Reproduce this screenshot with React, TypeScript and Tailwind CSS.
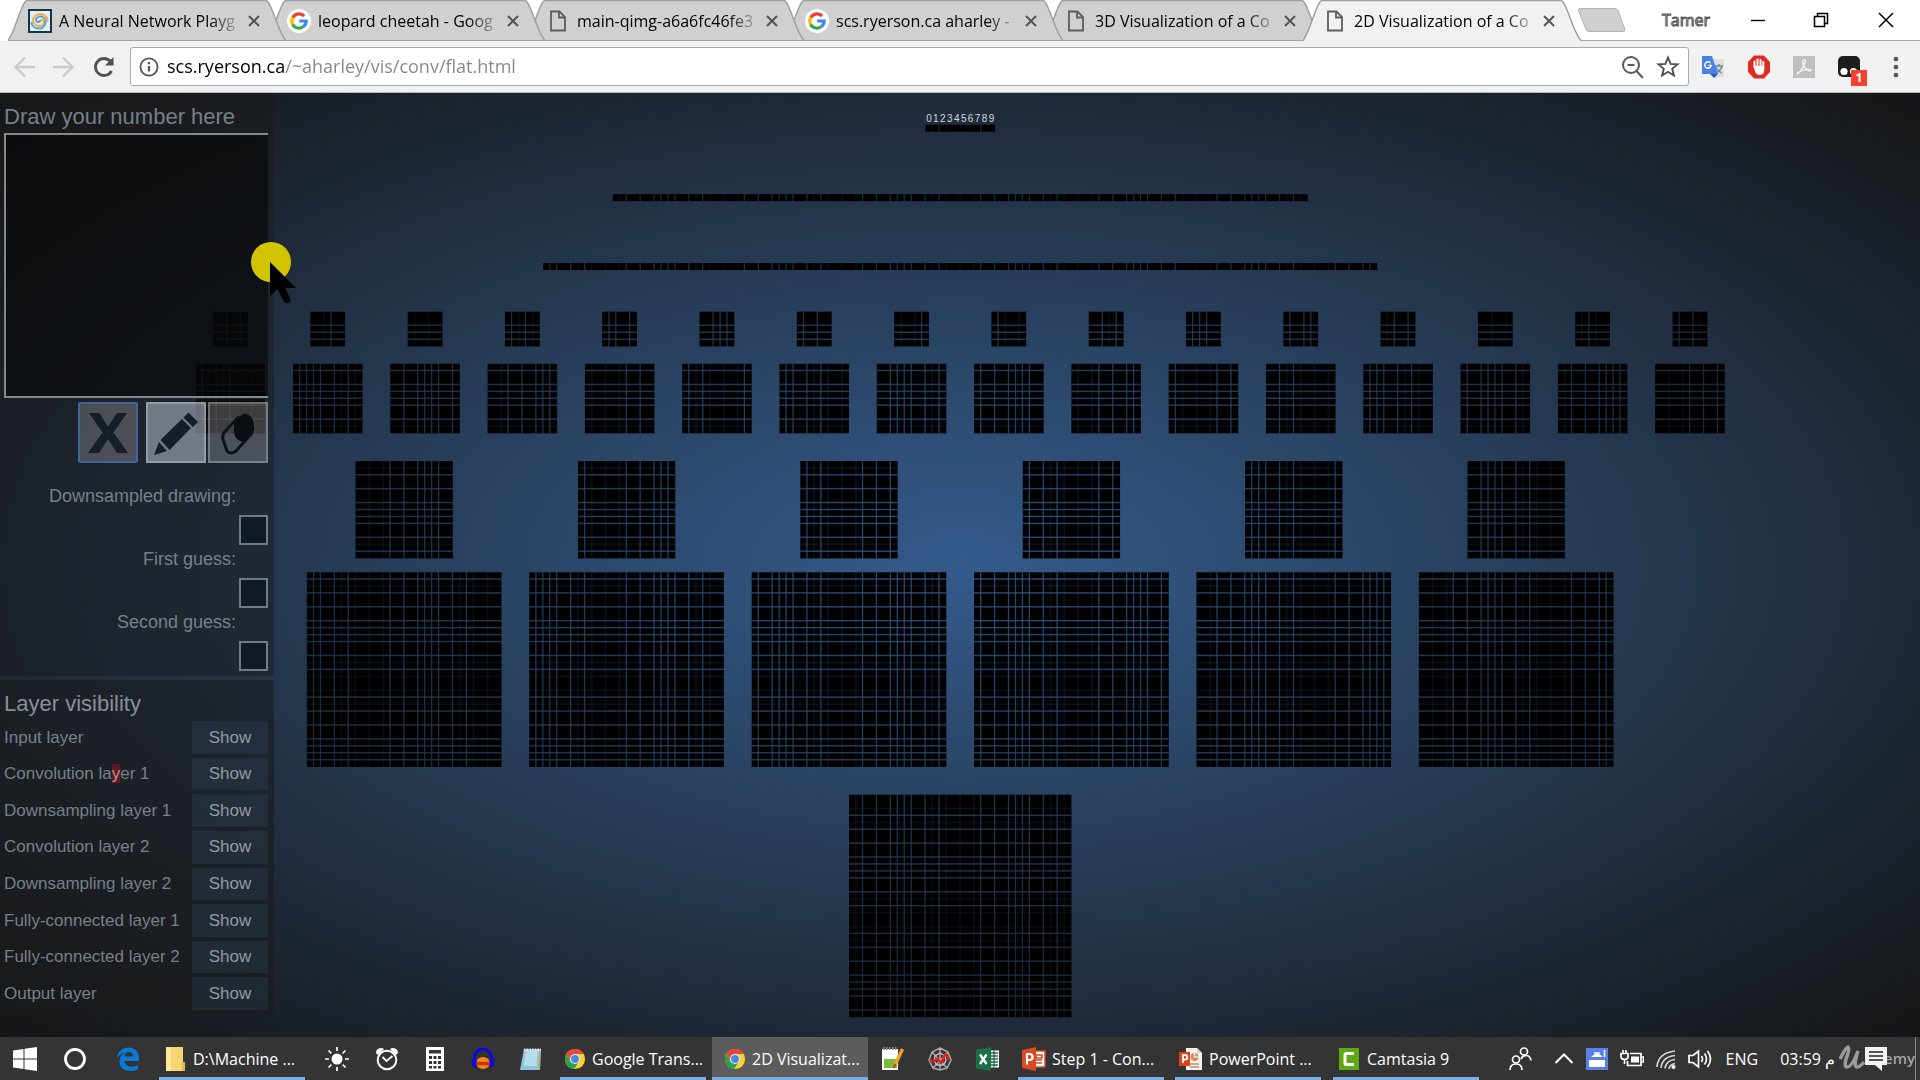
import type { ReactNode } from "react";

/* ---------- network drawing ---------- */

const CELL = 6.95;
const X0 = 306.9;
const Y0 = 479.3;
// s = strong gap, f = faint gap, n = no visible gap
const PX = "ssssnsfsfnfnfsnsn";
const PY = "ssssnsfsfnfsfsnsn";
const mod = (a: number, n: number) => ((a % n) + n) % n;

type MapProps = { col: number; row: number; cols: number; rows: number; phaseX?: number; phaseY?: number };

function FeatureMap({ col, row, cols, rows, phaseX = col + 1, phaseY = row - 7 }: MapProps) {
  const x = X0 + col * CELL;
  const y = Y0 + row * CELL;
  const w = cols * CELL;
  const h = rows * CELL;
  const lines: ReactNode[] = [];
  for (let i = 1; i < cols; i++) {
    const kind = PX[mod(phaseX + i, 17)];
    if (kind !== "n")
      lines.push(
        <rect key={"v" + i} x={x + i * CELL - 1} y={y} width={kind === "s" ? 1.3 : 1.8} height={h} opacity={kind === "s" ? 0.8 : 0.2} fill="url(#glow)" />
      );
  }
  for (let i = 1; i < rows; i++) {
    const kind = PY[mod(phaseY + i, 17)];
    if (kind !== "n")
      lines.push(
        <rect key={"h" + i} x={x} y={y + i * CELL - 1} width={w} height={kind === "s" ? 1.5 : 1.8} opacity={kind === "s" ? 0.8 : 0.2} fill="url(#glow)" />
      );
  }
  return (
    <g>
      <rect x={x} y={y} width={w} height={h} fill="#000" />
      {lines}
    </g>
  );
}

const six = [0, 1, 2, 3, 4, 5];
const sixteen = Array.from({ length: 16 }, (_, i) => i);
const digits = "0123456789".split("");

function Network() {
  return (
    <svg className="absolute inset-0 h-full w-full" viewBox="0 0 1920 944" aria-label="Network layers">
      <defs>
        <radialGradient id="glow" gradientUnits="userSpaceOnUse" cx="0" cy="0" r="1" gradientTransform="translate(960 472) scale(1358 668)">
          <stop offset="0" stopColor="#345b8c" />
          <stop offset="1" stopColor="#151515" />
        </radialGradient>
      </defs>
      {digits.map((d, i) => (
        <text key={d} x={X0 + (89.5 + i) * CELL} y="29" fontSize="10" textAnchor="middle" fill="#d4d9de" fontFamily="Liberation Sans, sans-serif">
          {d}
        </text>
      ))}
      <FeatureMap col={89} row={-64.4} cols={10} rows={1} />
      <FeatureMap col={44} row={-54.4} cols={100} rows={1} />
      <FeatureMap col={34} row={-44.5} cols={120} rows={1} />
      {sixteen.map((i) => (
        <FeatureMap key={i} col={i * 14 - 13.5} row={-37.5} cols={5} rows={5} phaseX={i * 14 + 13} phaseY={15} />
      ))}
      {sixteen.map((i) => (
        <FeatureMap key={i} col={i * 14 - 16} row={-30} cols={10} rows={10} />
      ))}
      {six.map((i) => (
        <FeatureMap key={i} col={i * 32 + 7} row={-16} cols={14} rows={14} />
      ))}
      {six.map((i) => (
        <FeatureMap key={i} col={i * 32} row={0} cols={28} rows={28} />
      ))}
      <FeatureMap col={78} row={32} cols={32} rows={32} />
    </svg>
  );
}

/* ---------- shared icons ---------- */

function GoogleG() {
  return (
    <svg className="h-6 w-6" viewBox="0 0 24 24">
      <circle cx="12" cy="12" r="12" fill="#fff" />
      <g fill="none" strokeWidth="3.2">
        <path d="M17.2 7A7.2 7.2 0 0 0 5.8 8.6" stroke="#ea4335" />
        <path d="M5.8 8.4a7.2 7.2 0 0 0 0 7.2" stroke="#fbbc05" />
        <path d="M5.7 15.4a7.2 7.2 0 0 0 11 2" stroke="#34a853" />
        <path d="M12.2 12h7a7.2 7.2 0 0 1-2.6 5.5" stroke="#4285f4" />
      </g>
    </svg>
  );
}

function Spiral() {
  return (
    <svg className="h-6 w-6" viewBox="0 0 24 24">
      <rect x="1" y="1" width="22" height="22" fill="#e9eef2" stroke="#12354c" strokeWidth="2" />
      <g fill="none" strokeWidth="2" strokeLinecap="round">
        <path d="M12 12c1-2 4-1 4 1.500S13.500 17 11 17s-6-2-6-5.500S8 5 12 5s7.500 3 7.500 7" stroke="#f5a94a" />
        <path d="M12 12c-1 2-4 1-4-1s2-3.500 4.500-3.500 5 2 5 5S15.500 19.500 12 19.500 4 18 3.500 14" stroke="#5aa5dc" />
      </g>
    </svg>
  );
}

function PageIcon() {
  return (
    <svg className="h-6 w-6" viewBox="0 0 24 24" fill="none" stroke="#5c5c5c" strokeWidth="1.8">
      <path d="M5 2.500h8.500L19 8v13.500H5z" />
      <path d="M13 2.500v6h6" />
    </svg>
  );
}

function Chrome() {
  return (
    <svg className="h-6 w-[22px] shrink-0" viewBox="0 0 24 24">
      <circle cx="12" cy="12" r="11" fill="#fdd034" />
      <path d="M12 6.500h9.500A11 11 0 0 0 2.500 6.500l4.700 8.300z" fill="#e2483a" />
      <path d="M2.500 6.500A11 11 0 0 0 11 23l5.500-8.500-9.300.3z" fill="#2f9e4f" />
      <circle cx="12" cy="12" r="5.500" fill="#f2f2f2" />
      <circle cx="12" cy="12" r="4.300" fill="#4a86e8" />
    </svg>
  );
}

function PowerPoint() {
  return (
    <svg className="h-6 w-6 shrink-0" viewBox="0 0 24 24">
      <path d="M12 4h11v16H12z" fill="#fff" stroke="#d24726" strokeWidth="1.500" />
      <path d="M14 8h6v3h-6zM14 13h6M14 16h6" fill="none" stroke="#d24726" strokeWidth="1.600" />
      <path d="M0 3 14 0v24L0 21z" fill="#dc4a22" />
      <path d="M5 17.500V7h2.500a3 3 0 0 1 0 6H5" fill="none" stroke="#fff" strokeWidth="2.200" />
    </svg>
  );
}

function PowerPointFile() {
  return (
    <svg className="h-6 w-6 shrink-0" viewBox="0 0 24 24">
      <path d="M7 1h11l5 5v17H7z" fill="#f6f3f0" />
      <path d="M18 1v5h5" fill="#d7cfc8" />
      <circle cx="15.500" cy="10" r="4" fill="#d98a63" />
      <path d="M15.500 6v4h4" fill="none" stroke="#fff" strokeWidth="1.200" />
      <path d="M11 17h9M11 20h9" stroke="#c98b70" strokeWidth="1.300" />
      <path d="M0 5h11v14H0z" fill="#d9441c" />
      <path d="M4 16V8h2a2.300 2.300 0 0 1 0 4.600H4" fill="none" stroke="#fff" strokeWidth="1.800" />
    </svg>
  );
}

/* ---------- browser ---------- */

const tabs = [
  { title: "A Neural Network Playg", icon: <Spiral />, z: "z-[6]" },
  { title: "leopard cheetah - Goog", icon: <GoogleG />, z: "z-[5]" },
  { title: "main-qimg-a6a6fc46fe3", icon: <PageIcon />, z: "z-[4]" },
  { title: "scs.ryerson.ca aharley -", icon: <GoogleG />, z: "z-[3]" },
  { title: "3D Visualization of a Co", icon: <PageIcon />, z: "z-[2]" },
  { title: "2D Visualization of a Co", icon: <PageIcon />, z: "z-[7]", active: true },
];

function TabStrip() {
  return (
    <div className="flex h-[41px] items-stretch bg-white pl-2">
      <div className="flex" role="tablist">
        {tabs.map((t, i) => (
          <div key={t.title} role="tab" aria-selected={!!t.active} className={`relative flex w-[278px] shrink-0 items-center pr-[26px] pl-5 ${i ? "-ml-[19px]" : ""} ${t.z}`}>
            <svg className="absolute inset-0 h-full w-full" viewBox="0 0 278 41">
              <path d="M0 41C6 34 12 8 17 2q1-1.500 3-1.500h237q2 0 3 1.500C265 8 271 34 278 41z" fill={t.active ? "#f1f1f1" : "#d0d0d0"} />
              <path d="M0 40.500C6 34 12 8 17 2q1-1.500 3-1.500h237q2 0 3 1.500C265 8 271 34 278 40.500" fill="none" stroke="#a0a0a0" strokeWidth="1.500" />
              {!t.active && <path d="M0 40.500h278" stroke="#a0a0a0" />}
            </svg>
            <span className="relative">{t.icon}</span>
            <span className="relative ml-[7px] min-w-0 flex-1 text-[16px] leading-6 whitespace-nowrap text-black [mask-image:linear-gradient(to_right,black_84%,#0004_98%)]">{t.title}</span>
            <button aria-label="Close tab" className="relative ml-2.5">
              <svg className="h-3 w-3" viewBox="0 0 12 12" stroke="#555" strokeWidth="2">
                <path d="M1 1l10 10M11 1L1 11" />
              </svg>
            </button>
          </div>
        ))}
      </div>
      <div className="-ml-2 flex flex-1 items-center border-b border-[#a8a8a8] pr-[26px]">
        <button aria-label="New tab" className="ml-1">
          <svg className="h-6 w-[50px]" viewBox="0 0 50 24">
            <path d="M2 .5h36q2 0 3 2l7 19q.5 2-1.500 2H12q-2 0-3-2L1.500 2.500q-.5-2 1-2z" fill="#cfcfcf" stroke="#b5b5b5" />
          </svg>
        </button>
        <span className="ml-auto text-[16px] text-[#444] [-webkit-text-stroke:1px_#555]">
          <span className="text-white">Tamer</span>
        </span>
        <button aria-label="Minimize" className="ml-10">
          <svg className="h-4 w-4" viewBox="0 0 16 16"><path d="M1 8.500h14" stroke="#000" strokeWidth="1.400" /></svg>
        </button>
        <button aria-label="Restore" className="ml-[47px]">
          <svg className="h-4 w-4" viewBox="0 0 16 16" fill="none" stroke="#000" strokeWidth="1.500">
            <path d="M1.500 4.500h10v10h-10zM4.500 4.500v-3h10v10h-3" />
          </svg>
        </button>
        <button aria-label="Close" className="ml-[49px]">
          <svg className="h-4 w-4" viewBox="0 0 16 16" stroke="#000" strokeWidth="1.500"><path d="M1 1l14 14M15 1L1 15" /></svg>
        </button>
      </div>
    </div>
  );
}

function Toolbar() {
  return (
    <div className="flex h-[52px] items-center border-b border-[#b8b8b8] bg-[#f1f1f1] pr-4 pl-3">
      <button aria-label="Back" className="h-6 w-6">
        <svg viewBox="0 0 24 24" fill="none" stroke="#cbcbcb" strokeWidth="2.400"><path d="M23 12H4M13 2.500L3.500 12l9.500 9.500" /></svg>
      </button>
      <button aria-label="Forward" className="ml-4 h-6 w-6">
        <svg viewBox="0 0 24 24" fill="none" stroke="#cbcbcb" strokeWidth="2.400"><path d="M1 12h19M11 2.500l9.500 9.500-9.500 9.500" /></svg>
      </button>
      <button aria-label="Reload" className="ml-4 h-6 w-6">
        <svg viewBox="0 0 24 24" fill="none" stroke="#505050" strokeWidth="2.800">
          <path d="M19.500 16A8.500 8.500 0 1 1 18.500 6.500" />
          <path d="M21.500 2v8.500H13z" fill="#505050" stroke="none" />
        </svg>
      </button>
      <div className="ml-3.5 flex h-[39px] flex-1 items-center rounded-[3px] border border-[#a9a9a9] bg-white px-2">
        <svg className="h-5 w-5" viewBox="0 0 20 20" fill="none" stroke="#555" strokeWidth="1.800">
          <circle cx="10" cy="10" r="8.600" />
          <path d="M10 9v5.500M10 5v2.300" strokeWidth="2.200" />
        </svg>
        <input
          aria-label="Address"
          defaultValue="scs.ryerson.ca/~aharley/vis/conv/flat.html"
          className="ml-2 min-w-0 flex-1 bg-[linear-gradient(to_right,#000_118px,#868686_118px)] bg-clip-text text-[18px] text-transparent outline-none"
        />
        <button aria-label="Zoom" className="h-6 w-6">
          <svg viewBox="0 0 24 24" fill="none" stroke="#5a5a5a" strokeWidth="2">
            <circle cx="11" cy="10" r="8" /><path d="M7.500 10h7M16.500 16l6.500 7" />
          </svg>
        </button>
        <button aria-label="Bookmark" className="ml-3 h-6 w-6">
          <svg viewBox="0 0 24 24" fill="none" stroke="#505050" strokeWidth="1.900">
            <path d="M12 2.500l2.600 6.400 6.900.5-5.300 4.400 1.700 6.700-5.900-3.700-5.900 3.700 1.700-6.700L2.500 9.400l6.900-.5z" />
          </svg>
        </button>
      </div>
      <button aria-label="Translate" className="ml-3 h-6 w-6">
        <svg viewBox="0 0 24 24">
          <path d="M9 4h14v18H12z" fill="#dedede" />
          <path d="M14 11h8M18 9v2M21 11c-1 4-4 6-6 7M15 12c1 3 4 5 6 6" fill="none" stroke="#6c8796" strokeWidth="1.300" />
          <path d="M1 1h10l6 18H1z" fill="#4a7fe8" />
          <path d="M9 19h8l-4 4z" fill="#2f57c5" />
          <path d="M9.500 8A3.200 3.200 0 1 0 10.200 10.500H7.500" fill="none" stroke="#fff" strokeWidth="1.500" />
        </svg>
      </button>
      <button aria-label="Ad blocker" className="ml-[22px] h-6 w-6">
        <svg viewBox="0 0 24 24">
          <path d="M7 .5h10l6 6.500v10l-6 6.500H7L1 17V7z" fill="#e02b20" />
          <path d="M7.500 12V6.500M10.500 11V4.500M13.500 11V5M16.300 12V7" stroke="#fff" strokeWidth="2" strokeLinecap="round" />
          <path d="M6.500 11h10.800v3.500q0 5-4.300 5.500-3.500 0-5-3.500z" fill="#fff" />
        </svg>
      </button>
      <button aria-label="PDF" className="ml-[21px] h-6 w-6">
        <svg viewBox="0 0 24 24">
          <path d="M1 1h22v22H1z" fill="#bfbfbf" />
          <path d="M11.500 5q-1.500 0 0 5t6.500 6q2.500-1-2-1.500T6 17.500q-2 2.500.5.500t5.500-8 0-5" fill="none" stroke="#f2f2f2" strokeWidth="1.500" />
        </svg>
      </button>
      <button aria-label="Scripts" className="relative ml-[21px] h-6 w-6">
        <svg viewBox="0 0 24 24">
          <rect x="1" y="1" width="22" height="21" rx="5" fill="#1d1d1d" />
          <circle cx="7" cy="16.500" r="3.600" fill="#fff" /><circle cx="16.500" cy="16.500" r="3.600" fill="#fff" />
        </svg>
        <span className="absolute top-[15px] left-[14px] h-4 w-4 bg-[#f5412d] text-center text-[12px] leading-4 font-bold text-white">1</span>
      </button>
      <button aria-label="Menu" className="ml-[27px] h-6 w-4">
        <svg viewBox="0 0 16 24" fill="#555"><circle cx="8" cy="4" r="2.300" /><circle cx="8" cy="12" r="2.300" /><circle cx="8" cy="20" r="2.300" /></svg>
      </button>
    </div>
  );
}

/* ---------- side panel ---------- */

function Guess({ label }: { label: string }) {
  return (
    <div className="flex h-[63px] flex-col items-end justify-between">
      <div className="pr-8 text-[18px] leading-7">{label}</div>
      <div className="h-[30px] w-[29px] border-2 border-[#737a81] bg-[#111b26]" />
    </div>
  );
}

const layers: ReactNode[] = [
  "Input layer",
  <>Convolution la<span className="bg-[#5c1a22] text-[#c98a8a]">y</span>er 1</>,
  "Downsampling layer 1",
  "Convolution layer 2",
  "Downsampling layer 2",
  "Fully-connected layer 1",
  "Fully-connected layer 2",
  "Output layer",
];

function SidePanel() {
  return (
    <aside className="relative flex w-[274px] flex-col gap-1 font-['Liberation_Sans',sans-serif] text-[#77808a]">
      <section className="bg-[#1a1a1a]/50 pr-1.5 pb-[5px] pl-1">
        <h2 className="pt-2 text-[22px] leading-8">Draw your number here</h2>
        <div className="h-[265px] border-2 border-r-0 border-[#85888b] bg-black/50" />
        <div className="mt-1 flex justify-end gap-0.5">
          <button aria-label="Clear" className="mr-1.5 h-[61px] w-[60px] rounded-[2px] border-2 border-[#3f659b] bg-white/20">
            <svg viewBox="0 0 56 56"><path d="M9 8h10.500L28 21.500 37 8h10L33.500 27.500 48 48H37L28 34 19 48H8l14.500-20.500z" fill="#161d29" /></svg>
          </button>
          <button aria-label="Pencil" className="h-[61px] w-[60px] border-2 border-white/25 bg-[#c8d0e0]/50">
            <svg viewBox="0 0 56 56" fill="#161d29">
              <path d="M6 50l5-13 8 9zM12.500 35L34 14l9 9-21.500 22zM35.500 12.500L40.500 7.500 50 17l-5 5z" />
            </svg>
          </button>
          <button aria-label="Eraser" className="h-[61px] w-[60px] border-2 border-white/25 bg-white/20">
            <svg viewBox="0 0 56 56">
              <path d="M24 16L34 8.500q10 1 10 14v3L33 37q-8-2-9-10z" fill="#0a0d12" />
              <path d="M29 11.500L14.500 27q-3 4-1 9l3.500 10q4 4 9 0L43 27" fill="none" stroke="#0d1118" strokeWidth="3" />
            </svg>
          </button>
        </div>
        <div className="mt-[19px]">
          <Guess label="Downsampled drawing:" />
          <Guess label="First guess:" />
          <Guess label="Second guess:" />
        </div>
      </section>
      <section className="bg-[#1a1a1a]/60 pr-1.5 pb-1 pl-1">
        <h2 className="pt-2 pb-px text-[22px] leading-8 text-[#87909a]">Layer visibility</h2>
        <div className="grid h-[289px] auto-rows-fr gap-1">
          {layers.map((l, i) => (
            <div key={i} className="flex items-stretch justify-between text-[17px]">
              <span className="self-center">{l}</span>
              <button className="w-[76px] bg-[#3c6080]/20 text-[#929aa2]">Show</button>
            </div>
          ))}
        </div>
      </section>
    </aside>
  );
}

function Pointer() {
  return (
    <svg className="absolute top-[149px] left-[250px] h-[64px] w-[50px]" viewBox="0 0 50 64">
      <circle cx="21" cy="20" r="20" fill="#d2c400" />
      <path d="M20 20l26 26H35l6 12q-2 5-7 2L27.500 47 20 54z" fill="#000" />
    </svg>
  );
}

/* ---------- taskbar ---------- */

function Pinned({ label, children }: { label: string; children: ReactNode }) {
  return (
    <button aria-label={label} className="flex w-12 shrink-0 items-center justify-center">
      <svg className="h-6 w-6" viewBox="0 0 24 24">{children}</svg>
    </button>
  );
}

function Running({ icon, label, active }: { icon: ReactNode; label: string; active?: boolean }) {
  return (
    <button className={`flex shrink-0 items-center gap-1.5 border-b-3 border-[#76b0ea] pt-[3px] text-[16px] whitespace-nowrap text-white ${active ? "w-[156px] bg-[#5c5c5c] pl-3" : "w-[146px] pl-1"}`}>
      {icon}
      {label}
    </button>
  );
}

function Taskbar() {
  return (
    <footer className="flex h-[43px] shrink-0 bg-[#343434] pl-px">
      <Pinned label="Start">
        <path d="M0 3.500l10.500-1.500v9.500H0zM11.500 1.800L24 0v11.500H11.500zM0 12.500h10.500V22L0 20.500zM11.500 12.500H24V24l-12.500-1.800z" fill="#fff" />
      </Pinned>
      <div className="w-0.5" />
      <Pinned label="Search"><circle cx="12" cy="12" r="9.500" fill="none" stroke="#fff" strokeWidth="2.800" /></Pinned>
      <div className="w-[5px]" />
      <Pinned label="Edge">
        <path d="M1 11C2 4 7 .5 12.500.5 19 .5 23 5 23 11v3H8.500c.3 4 3.500 5.500 7 5.500 2.500 0 4.500-.6 6.500-1.800v4.500c-2 1.200-4.500 1.800-7.500 1.800-6.500 0-11-3.500-11-9.500 0-4 2-7 5.500-8.800C5.500 6.500 3 8 1 11zm7.500-1.500H17c0-2.800-1.500-4.500-4-4.500s-4 1.500-4.500 4.500z" fill="#0a78d7" />
      </Pinned>
      <div className="w-[7px]" />
      <Running
        label="D:\Machine ..."
        icon={
          <svg className="h-6 w-6 shrink-0" viewBox="0 0 24 24">
            <path d="M3 0h17v15h2v9H3z" fill="#f6d673" /><path d="M3 0h5v24H3z" fill="#fbe596" /><path d="M19 15h3v9h-3z" fill="#e3b94c" />
          </svg>
        }
      />
      <div className="w-2" />
      <Pinned label="Brightness">
        <circle cx="12" cy="12" r="5.500" fill="#fff" />
        <path d="M12 0v4M12 20v4M0 12h4M20 12h4M3.500 3.500l2.800 2.800M17.700 17.700l2.800 2.800M20.500 3.500l-2.800 2.800M3.500 20.500l2.800-2.800" stroke="#fff" strokeWidth="1.700" />
      </Pinned>
      <div className="w-0.5" />
      <Pinned label="Alarms">
        <circle cx="12" cy="13" r="9.300" fill="none" stroke="#fff" strokeWidth="2" />
        <path d="M7.500 10l4 4 6-5" fill="none" stroke="#fff" strokeWidth="1.800" />
        <path d="M1 6q0-5 6-5l2 1-6 6zM23 6q0-5-6-5l-2 1 6 6z" fill="#fff" />
      </Pinned>
      <Pinned label="Calculator">
        <path d="M3 0h18v24H3z" fill="#fff" />
        <path d="M6 3h12v3.500H6zM6 9h3v3H6zM10.500 9h3v3h-3zM15 9h3v3h-3zM6 14h3v3H6zM10.500 14h3v3h-3zM15 14h3v3h-3zM6 19h3v2.500H6zM10.500 19h3v2.500h-3zM15 19h3v2.500h-3z" fill="#343434" />
      </Pinned>
      <Pinned label="Audacity">
        <path d="M3.500 15v-4a8.500 9 0 0 1 17 0v4" fill="none" stroke="#0909d8" strokeWidth="3" />
        <ellipse cx="12" cy="16" rx="7" ry="6" fill="#ee8a12" /><path d="M6 16.500h12" stroke="#d62b12" strokeWidth="3.500" />
        <path d="M.5 12h5v9q-5-1-5-6zM23.500 12h-5v9q5-1 5-6z" fill="#0b0bd4" />
      </Pinned>
      <Pinned label="Notepad">
        <path d="M5 2h17l-1 21H1z" fill="#8fc3da" /><path d="M7 4h12l-1.500 15H4.500z" fill="#b4dcec" />
        <path d="M5 3h17" stroke="#e8e8e8" strokeWidth="3" strokeDasharray="1.500 1.200" /><path d="M21 4l-1 19" stroke="#c7a76d" strokeWidth="1.500" />
      </Pinned>
      <div className="w-[5px]" />
      <Running icon={<Chrome />} label="Google Trans..." />
      <div className="w-1.5" />
      <Running active icon={<Chrome />} label="2D Visualizat..." />
      <Pinned label="Notepad++">
        <path d="M2 2h16v21H2z" fill="#fff" /><path d="M4 12h13v9H4z" fill="#7cbc3c" />
        <path d="M3 1.500h15" stroke="#888" strokeWidth="3" strokeDasharray="1.500 1.500" />
        <path d="M22.500 2L15 18" stroke="#f2a71b" strokeWidth="3.500" /><path d="M15.500 17l-2 4" stroke="#c23b22" strokeWidth="2" />
      </Pinned>
      <Pinned label="Spyder">
        <path d="M12 1l8 4 3 8-4 8-7 2-7-2-4-8 3-8zM12 1v22M4 5l15 16M20 5L5 21" fill="none" stroke="#a9a9a9" strokeWidth="1.500" />
        <path d="M12 6l5 3 1 5-3 4H9l-3-4 1-5z" fill="none" stroke="#c4c4c4" strokeWidth="1.300" />
        <path d="M2 13q3.500 3 5.500 0t4 1 4-3 5.500 2" fill="none" stroke="#e0201b" strokeWidth="2.500" />
      </Pinned>
      <Pinned label="Excel">
        <path d="M13 3.500h10v17H13z" fill="#fff" /><path d="M14 6h8M14 9h8M14 12h8M14 15h8M14 18h8M18 4v16" stroke="#1d7044" strokeWidth="1.300" />
        <path d="M0 2.500L15 0v24L0 21.500z" fill="#1d7044" /><path d="M4 7.500l6.500 9.500M10.500 7.500L4 17" stroke="#fff" strokeWidth="2.300" />
      </Pinned>
      <div className="w-1.5" />
      <Running icon={<PowerPoint />} label="Step 1 - Con..." />
      <div className="w-[11px]" />
      <Running icon={<PowerPointFile />} label="PowerPoint ..." />
      <div className="w-3" />
      <Running
        label="Camtasia 9"
        icon={
          <svg className="h-6 w-6 shrink-0" viewBox="0 0 24 24">
            <path d="M2 1h20v22H2z" fill="#5da813" /><path d="M17 6.500H9.500Q8 6.500 8 8v8q0 1.500 1.500 1.500H17" fill="none" stroke="#fff" strokeWidth="3" />
          </svg>
        }
      />
      <div className="ml-auto flex shrink-0 items-center text-[16px] text-white">
        <button aria-label="People" className="mr-[22px]">
          <svg className="h-6 w-6" viewBox="0 0 24 24" fill="none" stroke="#fff" strokeWidth="1.700">
            <circle cx="8" cy="12.500" r="3.500" /><circle cx="16" cy="4.500" r="3.500" /><path d="M2 23q0-6 6-6t6 6M13 12q2-4 6-3.500 3.500 1 4 5" />
          </svg>
        </button>
        <button aria-label="Show hidden icons" className="mr-3">
          <svg className="h-5 w-5" viewBox="0 0 20 20" fill="none" stroke="#fff" strokeWidth="2"><path d="M1.500 14L10 5.500l8.500 8.500" /></svg>
        </button>
        <svg className="mr-3 h-6 w-[22px]" viewBox="0 0 22 24">
          <path d="M0 1h22v22H0z" fill="#5b7fe6" /><path d="M3 13h16v7H3zM5 10q6-7 12 0z" fill="#fff" /><path d="M18.500 3v7M8 6h6" stroke="#fff" strokeWidth="1.500" />
        </svg>
        <svg className="mr-3 h-6 w-6" viewBox="0 0 24 24" fill="none" stroke="#fff" strokeWidth="1.700">
          <path d="M10 6.500h11v12H7.500V14M21.500 10h2v5h-2" /><path d="M11 9.500h8v6h-8z" fill="#fff" stroke="none" /><path d="M1 6.500h7v3q0 3-3.500 3T1 9.500zM3 3v3M6 3v3M4.500 12v5" />
        </svg>
        <svg className="mr-3 h-6 w-5" viewBox="0 0 20 24" fill="none" stroke="#fff" strokeWidth="1.700">
          <path d="M1 20Q2 6 19 4M5 21Q6 10 19 8.500M9 21.500q1-8 10-9M13 22q.5-4.500 6-5.500" stroke="#d5d5d5" /><circle cx="17.500" cy="20" r="2" fill="#fff" stroke="none" />
        </svg>
        <svg className="mr-3.5 h-6 w-6" viewBox="0 0 24 24" fill="none" stroke="#fff" strokeWidth="1.700">
          <path d="M1 8.500h4L10.500 4v16L5 15.500H1zM13.500 9q2 3 0 6M16.500 6.500q4 5.500 0 11M19.500 4q6 8 0 16" />
        </svg>
        <span className="mr-[22px]">ENG</span>
        <span className="mr-1 font-['Open_Sans','DejaVu_Sans',sans-serif]" dir="ltr">03:59 م</span>
        <div className="relative flex h-7 w-[76px] items-center justify-end">
          <svg className="absolute top-0 left-0 h-7 w-12" viewBox="0 0 48 28">
            <path d="M26 2h22v18h-5v6l-7-6H26z" fill="#f2f2f2" />
            <path d="M30 7h14M30 11h14M30 15h14" stroke="#555" strokeWidth="1.800" />
            <path d="M1 14Q7 2 9 2q2 2-2 12-2 8 1 8 5 0 11-16-5 16-1 16 3 0 7-5" fill="none" stroke="#9b9b9b" strokeWidth="3.500" />
          </svg>
          <span className="text-[15px] font-semibold text-[#a5a5a5]">emy</span>
        </div>
        <div className="mr-1 h-[43px] w-px bg-[#8a8a8a]" />
      </div>
    </footer>
  );
}

export default function App() {
  return (
    <div className="flex h-screen flex-col overflow-hidden bg-[#151515] font-['Open_Sans','Noto_Sans',sans-serif]">
      <TabStrip />
      <Toolbar />
      <main className="relative min-h-0 flex-1 bg-[radial-gradient(#345b8c,#151515)]">
        <Network />
        <SidePanel />
        <Pointer />
      </main>
      <Taskbar />
    </div>
  );
}
